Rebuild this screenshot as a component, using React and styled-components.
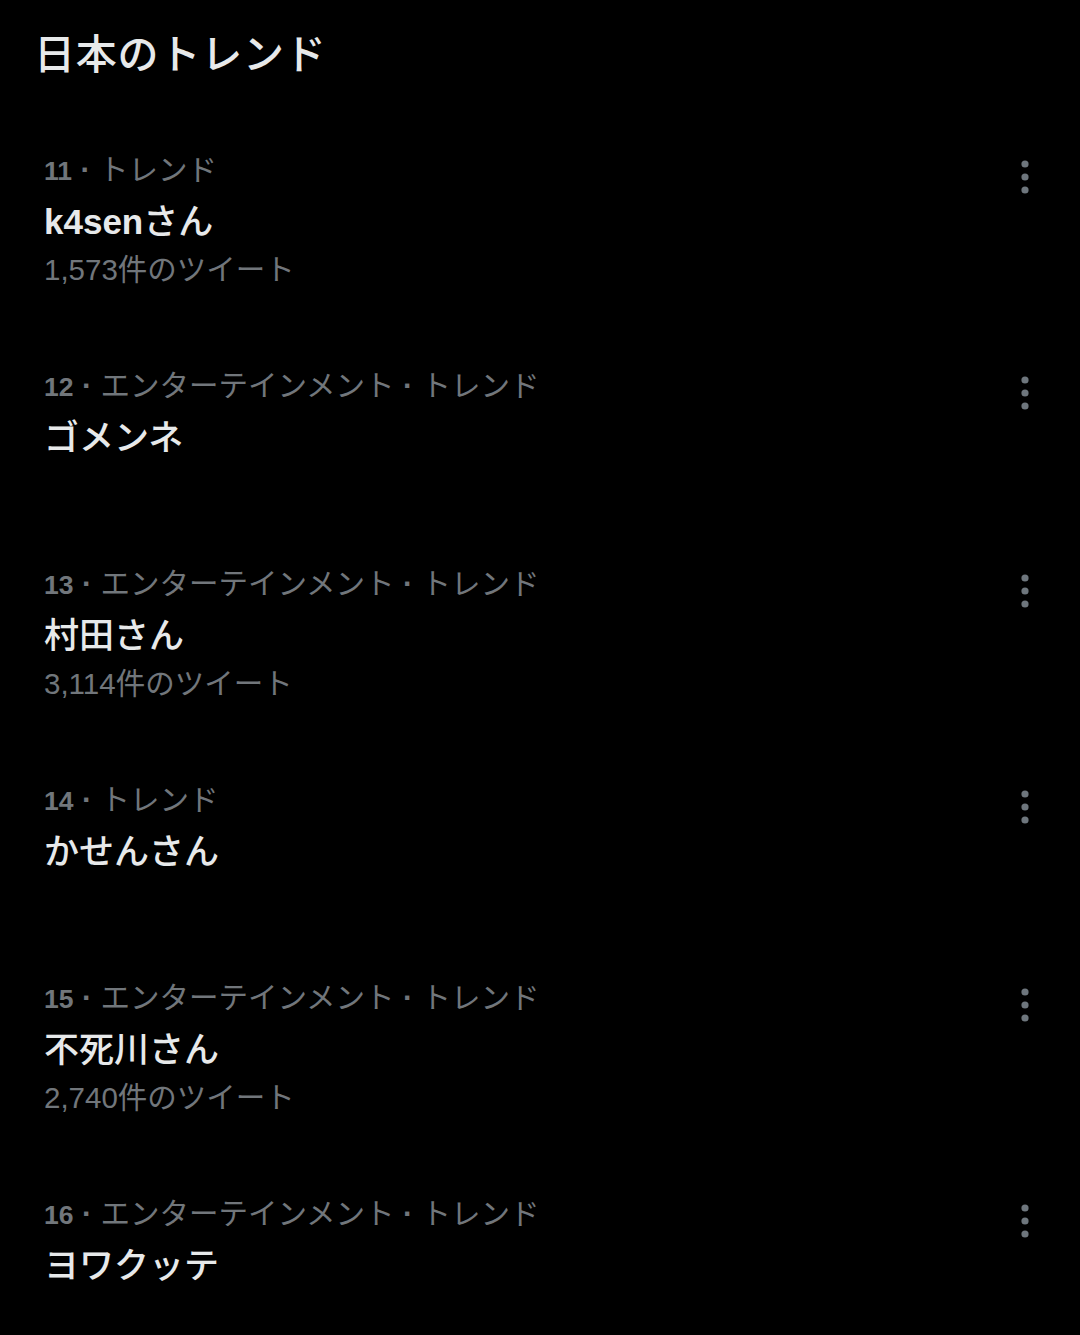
import React from "react";
import styled, { createGlobalStyle } from "styled-components";

const Global = createGlobalStyle`
  html, body { margin: 0; padding: 0; background: #000; }
  body { font-family: "Liberation Sans", "Noto Sans CJK JP", sans-serif; }
`;

const Page = styled.div`
  width: 1080px;
  min-height: 1335px;
  background: #000;
  display: flex;
  flex-direction: column;
`;

const Title = styled.h2`
  margin: 0;
  padding: 27px 0 0 34px;
  height: 48px;
  font-family: "Noto Sans CJK JP", sans-serif;
  font-size: 41px;
  line-height: 48px;
  font-weight: 500;
  color: #e7e9ea;
  letter-spacing: 0.8px;
`;

const List = styled.div`
  display: flex;
  flex-direction: column;
  margin-top: 35px;
`;

const Row = styled.div`
  display: flex;
  align-items: flex-start;
  justify-content: space-between;
  min-height: 198px;
  box-sizing: border-box;
  padding: 32px 35px 31px 44px;
`;

const Body = styled.div`
  display: flex;
  flex-direction: column;
`;

const Line = styled.div`
  height: 51px;
  line-height: 51px;
  white-space: nowrap;
  overflow: visible;
`;

const Meta = styled(Line)`
  font-family: "Noto Sans CJK JP", sans-serif;
  font-size: 29.5px;
  color: #71767b;
`;

const Num = styled.span`
  font-family: "Liberation Sans", sans-serif;
  font-weight: 700;
  font-size: 26.5px;
`;

const Sep = styled.span`
  display: inline-block;
  width: 27px;
  text-align: center;
  font-family: "Liberation Sans", sans-serif;
  font-weight: 700;
  font-size: 30px;
`;

const Name = styled(Line)`
  font-family: "Noto Sans CJK JP", sans-serif;
  font-size: 35px;
  font-weight: 500;
  color: #e7e9ea;
`;

const Latin = styled.span`
  font-family: "Liberation Sans", sans-serif;
  font-weight: 700;
  font-size: 35px;
`;

const Count = styled(Line)`
  font-family: "Liberation Sans", "Noto Sans CJK JP", sans-serif;
  font-size: 29.5px;
  color: #71767b;
`;

const More = styled.button`
  width: 40px;
  height: 40px;
  margin-top: 15px;
  padding: 0;
  border: none;
  background: transparent;
  display: flex;
  align-items: center;
  justify-content: center;
`;

const Dots = () => (
  <svg width="8" height="34" viewBox="0 0 8 34">
    <circle cx="4" cy="4" r="3.6" fill="#6e767d" />
    <circle cx="4" cy="17" r="3.6" fill="#6e767d" />
    <circle cx="4" cy="30" r="3.6" fill="#6e767d" />
  </svg>
);

const trends = [
  { n: 11, cat: ["トレンド"], latin: "k4sen", name: "さん", count: "1,573件のツイート" },
  { n: 12, cat: ["エンターテインメント", "トレンド"], name: "ゴメンネ" },
  { n: 13, cat: ["エンターテインメント", "トレンド"], name: "村田さん", count: "3,114件のツイート" },
  { n: 14, cat: ["トレンド"], name: "かせんさん" },
  { n: 15, cat: ["エンターテインメント", "トレンド"], name: "不死川さん", count: "2,740件のツイート" },
  { n: 16, cat: ["エンターテインメント", "トレンド"], name: "ヨワクッテ" },
];

export default function App() {
  return (
    <>
      <Global />
      <Page>
        <Title>日本のトレンド</Title>
        <List>
          {trends.map((t) => (
            <Row key={t.n}>
              <Body>
                <Meta>
                  <Num>{t.n}</Num>
                  {t.cat.map((c) => (
                    <React.Fragment key={c}>
                      <Sep>·</Sep>
                      {c}
                    </React.Fragment>
                  ))}
                </Meta>
                <Name>
                  {t.latin && <Latin>{t.latin}</Latin>}
                  {t.name}
                </Name>
                {t.count && <Count>{t.count}</Count>}
              </Body>
              <More aria-label="その他">
                <Dots />
              </More>
            </Row>
          ))}
        </List>
      </Page>
    </>
  );
}
